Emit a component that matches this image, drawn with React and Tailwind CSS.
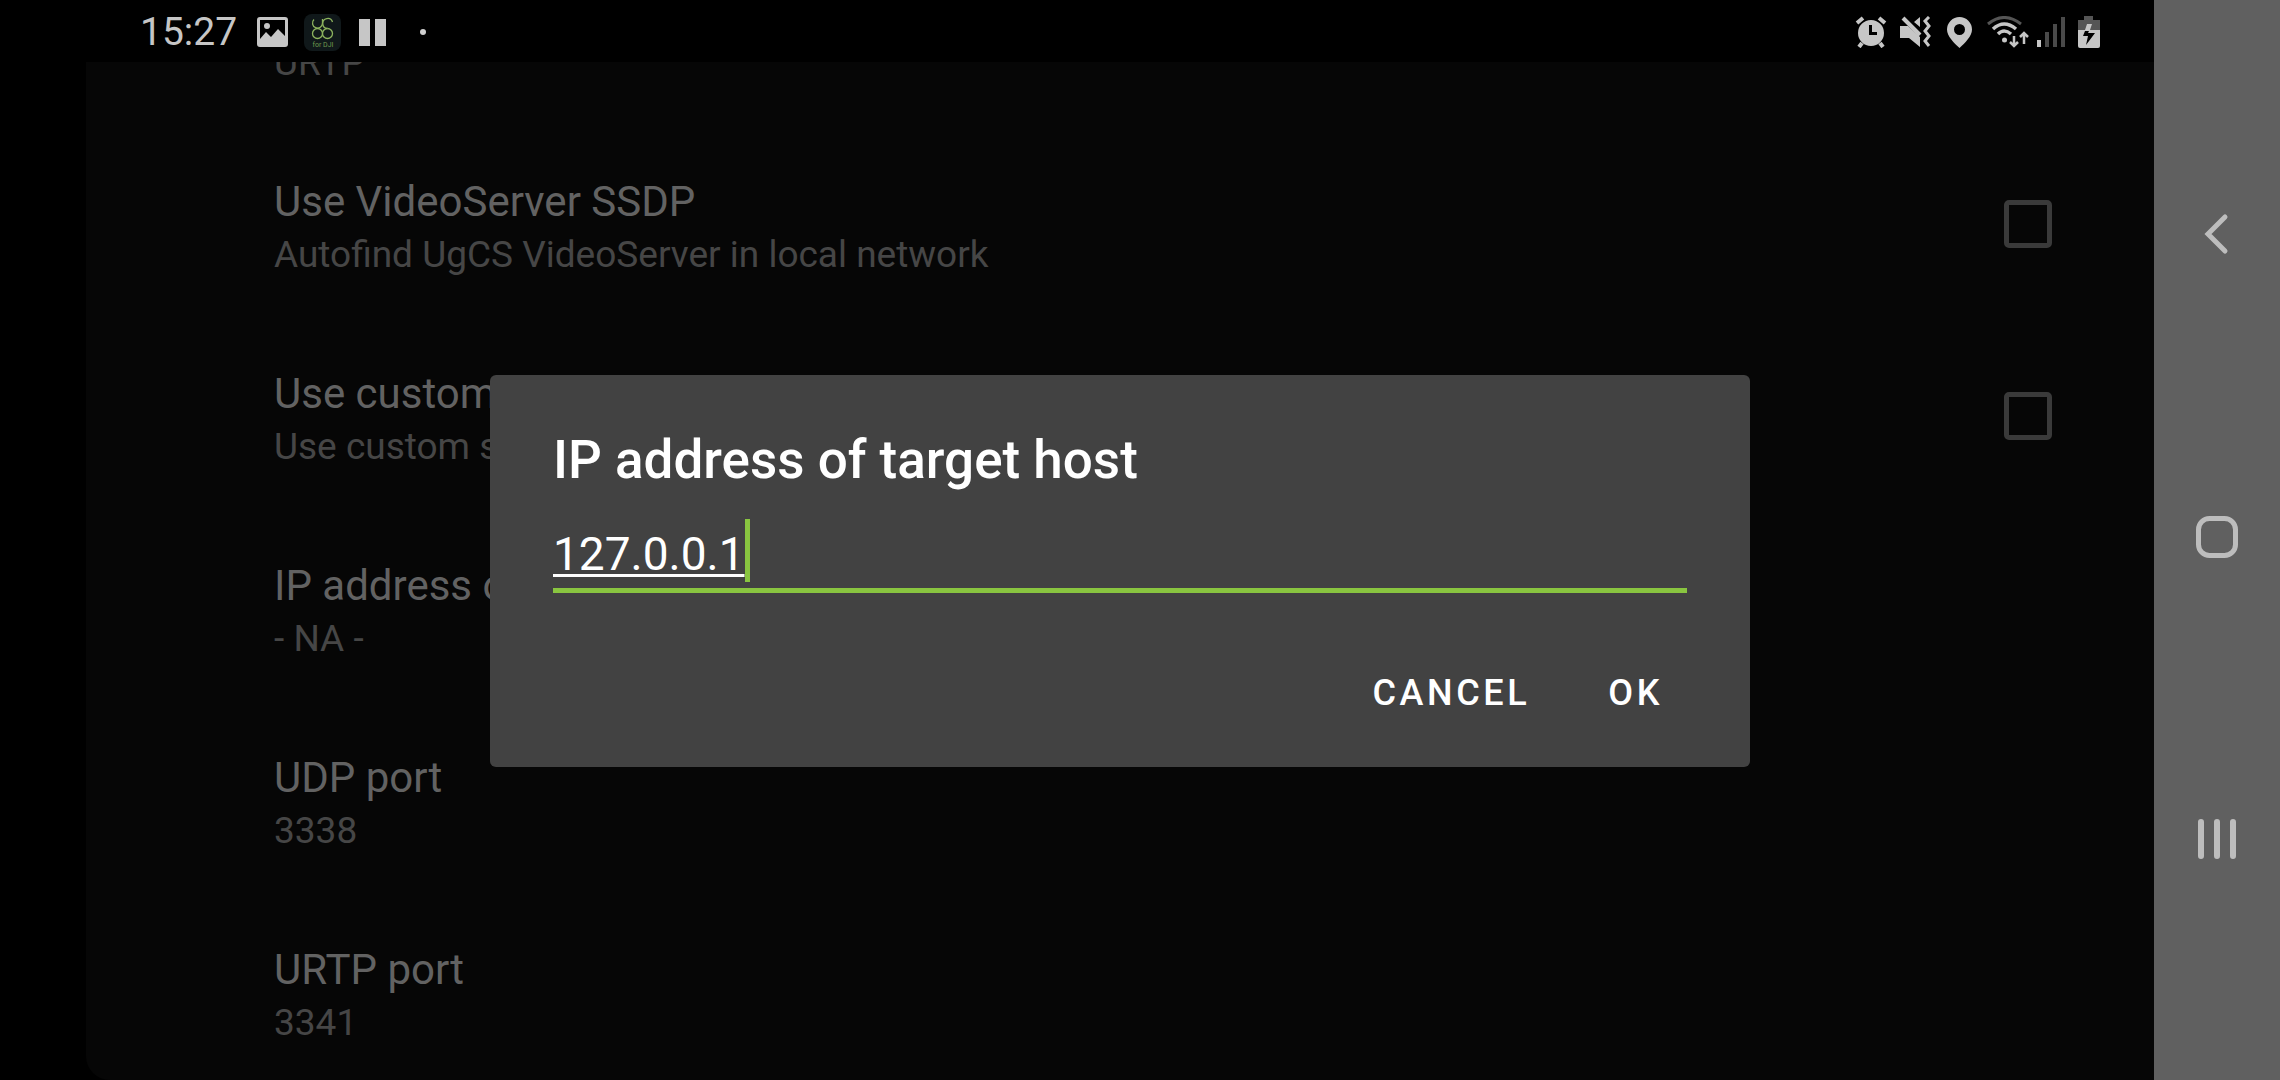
import { useState } from 'react';

const settings = [
  { id: 'ssdp', title: 'Use VideoServer SSDP', summary: 'Autofind UgCS VideoServer in local network', checkable: true },
  { id: 'custom', title: 'Use custom', summary: 'Use custom s', checkable: true },
  { id: 'host', title: 'IP address of', summary: '- NA -' },
  { id: 'udp', title: 'UDP port', summary: '3338' },
  { id: 'urtp', title: 'URTP port', summary: '3341' },
];

function StatusBar() {
  return (
    <header className="flex h-[62px] shrink-0 items-center justify-between pl-[140px] pr-[54px] pt-[2px] text-[#c6c6c6]">
      <div className="flex items-center">
        <span className="text-[39px] leading-[44px]">15:27</span>
        <svg className="ml-5" width="31" height="30" viewBox="0 0 31 30" aria-hidden="true">
          <path fillRule="evenodd" fill="currentColor" d="M3 0H28Q31 0 31 3V27Q31 30 28 30H3Q0 30 0 27V3Q0 0 3 0ZM3 3V22L9 15L14 20L21 12L28 19V3ZM10 6A3 3 0 1 1 10 12A3 3 0 1 1 10 6Z" />
        </svg>
        <svg className="ml-4" width="37" height="37" viewBox="0 0 37 37" aria-hidden="true">
          <rect width="37" height="37" rx="8" fill="#10181a" />
          <g fill="none" stroke="#8db35e" strokeWidth="1.3">
            <path d="M10 5.500A5 5 0 1 0 18.500 9V5" />
            <path d="M28.500 8A5 5 0 1 0 23.500 14.500" />
            <circle cx="13.500" cy="19.500" r="5" />
            <path d="M23.500 14.500A5 5 0 1 1 18.500 19.500" />
            <path d="M23.500 14.500A5 5 0 0 0 18.500 19.500" />
          </g>
          <text x="19" y="33" fontSize="7" textAnchor="middle" fill="#6f9a4e">for DJI</text>
        </svg>
        <svg className="ml-[18px]" width="27" height="27" viewBox="0 0 27 27" fill="currentColor" aria-hidden="true">
          <rect width="11" height="27" />
          <rect x="16" width="11" height="27" />
        </svg>
        <span className="ml-[34px] size-[6px] rounded-full bg-[#d0d0d0]" />
      </div>

      <div className="flex items-center">
        <svg width="32" height="32" viewBox="0 0 32 32" fill="currentColor" aria-hidden="true">
          <path fillRule="evenodd" d="M16 4A13 13 0 1 1 16 30A13 13 0 1 1 16 4ZM14 9V19H22V16H17V9Z" />
          <path d="M2 7L8 2M24 2L30 7M7 27L4 31M25 27L28 31" stroke="currentColor" strokeWidth="4" />
        </svg>
        <svg className="ml-[13px]" width="31" height="32" viewBox="0 0 31 32" fill="currentColor" aria-hidden="true">
          <path d="M0 10H8L20 21V31L9 22H0ZM20 1V11L14 6Z" />
          <path d="M3 2L20 19" stroke="currentColor" strokeWidth="4" />
          <path d="M29 1L25 5L29 10L25 15L29 20L25 25L29 30" fill="none" stroke="currentColor" strokeWidth="3" />
        </svg>
        <svg className="ml-4" width="25" height="31" viewBox="0 0 25 31" fill="currentColor" aria-hidden="true">
          <path fillRule="evenodd" d="M12.500 0A12.500 12.500 0 0 1 25 12.500C25 19 18 26 12.500 31C7 26 0 19 0 12.500A12.500 12.500 0 0 1 12.500 0ZM12.500 7A5.500 5.500 0 1 0 12.500 18A5.500 5.500 0 1 0 12.500 7Z" />
        </svg>
        <svg className="ml-[15px]" width="42" height="32" viewBox="0 0 42 32" fill="none" stroke="currentColor" strokeWidth="3" aria-hidden="true">
          <path d="M1 8Q17 -5 34 8" stroke="#555" />
          <path d="M6 13Q17 3 29 13M11 18Q17 12 24 18" strokeWidth="3.500" />
          <circle cx="17.500" cy="24" r="2.500" fill="currentColor" stroke="none" />
          <path d="M27 20V29M23 26L27 30L31 26M37 28V18M33 21L37 17L41 21" strokeWidth="2.500" />
        </svg>
        <svg className="ml-2" width="28" height="30" viewBox="0 0 28 30" fill="#4a4a4a" aria-hidden="true">
          <rect y="23" width="4" height="7" fill="#c6c6c6" />
          <rect x="8" y="15" width="4" height="15" />
          <rect x="16" y="7" width="4" height="23" />
          <rect x="24" width="4" height="30" />
        </svg>
        <svg className="ml-[13px]" width="22" height="32" viewBox="0 0 22 32" aria-hidden="true">
          <path d="M6 0H15V4H22V14H0V4H6Z" fill="#555" />
          <path d="M0 14H22V30Q22 32 20 32H2Q0 32 0 30Z" fill="currentColor" />
          <path d="M9 8H14L12 14H7Z" fill="currentColor" />
          <path d="M11 15L10 17H17L8 29L10 20H5L7 15Z" fill="#000" />
        </svg>
      </div>
    </header>
  );
}

function SettingRow({ item }) {
  const Tag = item.checkable ? 'label' : 'div';
  return (
    <li>
      <Tag className="flex h-[192px] items-center justify-between pt-[6px]">
        <span className="block">
          <span className="block text-[42px] leading-[55px] text-[#626262]">{item.title}</span>
          <span className="block text-[37px] leading-[52px] text-[#464646]">{item.summary}</span>
        </span>
        {item.checkable && (
          <input
            type="checkbox"
            className="mb-[6px] size-12 shrink-0 appearance-none rounded-[5px] border-[5px] border-[#3a3a3a]"
          />
        )}
      </Tag>
    </li>
  );
}

function AddressDialog() {
  const [address, setAddress] = useState('127.0.0.1');

  return (
    <form
      role="dialog"
      aria-labelledby="dialog-title"
      onSubmit={(e) => e.preventDefault()}
      className="w-[1260px] max-w-full rounded-md bg-[#424242] px-[63px] pt-[53px] pb-6 text-white"
    >
      <h2 id="dialog-title" className="text-[53px] leading-[64px] font-medium">
        <label htmlFor="address">IP address of target host</label>
      </h2>
      <div className="mt-[27px] flex items-center border-b-[5px] border-[#89c540] pb-[6px]">
        <input
          id="address"
          type="text"
          value={address}
          onChange={(e) => setAddress(e.target.value)}
          className="h-[63px] [field-sizing:content] bg-transparent pt-[6px] text-[46px] leading-[57px] underline decoration-3 underline-offset-4 caret-transparent outline-none"
        />
        <span className="h-[63px] w-[5px] bg-[#89c540]" />
      </div>
      <div className="mt-[50px] flex justify-end gap-[38px] pr-1 text-[36px] font-medium">
        <button type="button" className="h-[100px] px-5 tracking-widest">CANCEL</button>
        <button type="submit" className="h-[100px] px-5 tracking-widest">OK</button>
      </div>
    </form>
  );
}

function NavigationBar() {
  return (
    <nav className="flex w-[126px] shrink-0 flex-col items-center justify-around bg-[#606060] pt-[84px] pb-[90px] text-[#bdbdbd]">
      <button type="button" aria-label="Back">
        <svg width="44" height="44" viewBox="0 0 44 44" fill="none" stroke="currentColor" strokeWidth="5" strokeLinecap="round">
          <path d="M30 4L13 21L30 38" />
        </svg>
      </button>
      <button type="button" aria-label="Home">
        <svg width="44" height="44" viewBox="0 0 44 44" fill="none" stroke="currentColor" strokeWidth="5">
          <rect x="3.500" y="3.500" width="37" height="37" rx="11" />
        </svg>
      </button>
      <button type="button" aria-label="Recent apps">
        <svg width="44" height="44" viewBox="0 0 44 44" stroke="currentColor" strokeWidth="6" strokeLinecap="round">
          <path d="M6 5V39M22 5V39M38 5V39" />
        </svg>
      </button>
    </nav>
  );
}

export default function App() {
  return (
    <div className="flex h-screen overflow-hidden bg-black font-[Roboto,sans-serif]">
      <div className="flex min-w-0 flex-1 flex-col">
        <StatusBar />
        <main className="relative ml-[86px] min-h-0 flex-1 overflow-hidden rounded-bl-3xl bg-[#060606]">
          <div className="h-[66px] overflow-hidden pl-[188px]">
            <p className="-mt-[25px] text-[37px] leading-[52px] text-[#464646]">URTP</p>
          </div>
          <ul className="pr-[102px] pl-[188px]">
            {settings.map((item) => (
              <SettingRow key={item.id} item={item} />
            ))}
          </ul>
          <div className="absolute inset-0 flex items-center justify-center">
            <AddressDialog />
          </div>
        </main>
      </div>
      <NavigationBar />
    </div>
  );
}
